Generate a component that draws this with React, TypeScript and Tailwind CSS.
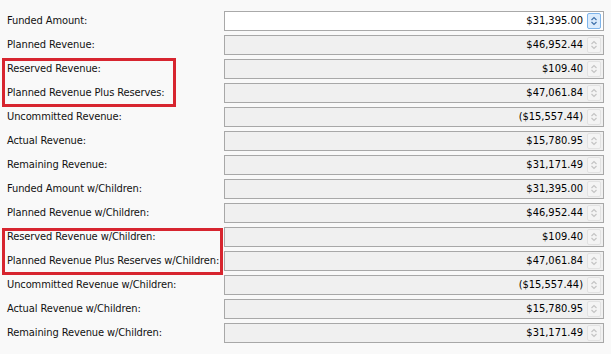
import React from 'react'

type Row = { label: string; value: string }

const ROWS: Row[] = [
  { label: 'Funded Amount:', value: '$31,395.00' },
  { label: 'Planned Revenue:', value: '$46,952.44' },
  { label: 'Reserved Revenue:', value: '$109.40' },
  { label: 'Planned Revenue Plus Reserves:', value: '$47,061.84' },
  { label: 'Uncommitted Revenue:', value: '($15,557.44)' },
  { label: 'Actual Revenue:', value: '$15,780.95' },
  { label: 'Remaining Revenue:', value: '$31,171.49' },
  { label: 'Funded Amount w/Children:', value: '$31,395.00' },
  { label: 'Planned Revenue w/Children:', value: '$46,952.44' },
  { label: 'Reserved Revenue w/Children:', value: '$109.40' },
  { label: 'Planned Revenue Plus Reserves w/Children:', value: '$47,061.84' },
  { label: 'Uncommitted Revenue w/Children:', value: '($15,557.44)' },
  { label: 'Actual Revenue w/Children:', value: '$15,780.95' },
  { label: 'Remaining Revenue w/Children:', value: '$31,171.49' },
]

// red outline drawn over a pair of label rows
const HIGHLIGHTS: Record<number, string> = {
  2: 'top-[1px] h-[49px] w-[174px]',
  9: 'top-[3px] h-[47px] w-[221px]',
}

const Spinner = ({ active }: { active: boolean }) => (
  <div
    className={
      'flex h-[16px] w-[14px] items-center justify-center rounded-[2px] border ' +
      (active ? 'border-[#7eb4ea] bg-[#dcecfc]' : 'border-[#e2e2e2] bg-[#f4f4f4]')
    }
  >
    <svg width="8" height="10" viewBox="0 0 8 10">
      <path
        d="M1.5 4 L4 1.5 L6.5 4 M1.5 6 L4 8.5 L6.5 6"
        fill="none"
        stroke={active ? '#3d6fa8' : '#c4c4c4'}
        strokeWidth="1.2"
      />
    </svg>
  </div>
)

const Field = ({ value, active }: { value: string; active: boolean }) => (
  <div
    className={
      'ml-auto flex h-[20px] w-[380px] shrink-0 items-center justify-end gap-[4px] border pr-[2px] ' +
      (active ? 'border-[#a9a9a9] bg-white' : 'border-[#a8a8a8] bg-[#f0f0f0]')
    }
  >
    <span className="text-[11px] text-black">{value}</span>
    <Spinner active={active} />
  </div>
)

export default function App() {
  return (
    <div
      className="flex h-[354px] w-[611px] flex-col bg-[#f9f9f9] pt-[9px] pr-[7px]"
      style={{ fontFamily: '"DejaVu Sans Condensed", "Liberation Sans", sans-serif' }}
    >
      {ROWS.map((row, i) => (
        <div key={i} className="relative flex h-[24px] items-center">
          {HIGHLIGHTS[i] && (
            <div
              className={'pointer-events-none absolute left-[2px] border-[3px] border-[#d7252f] ' + HIGHLIGHTS[i]}
            />
          )}
          <span className="whitespace-nowrap pl-[7px] text-[11px] tracking-[-0.1px] text-[#111]">{row.label}</span>
          <Field value={row.value} active={i === 0} />
        </div>
      ))}
    </div>
  )
}
